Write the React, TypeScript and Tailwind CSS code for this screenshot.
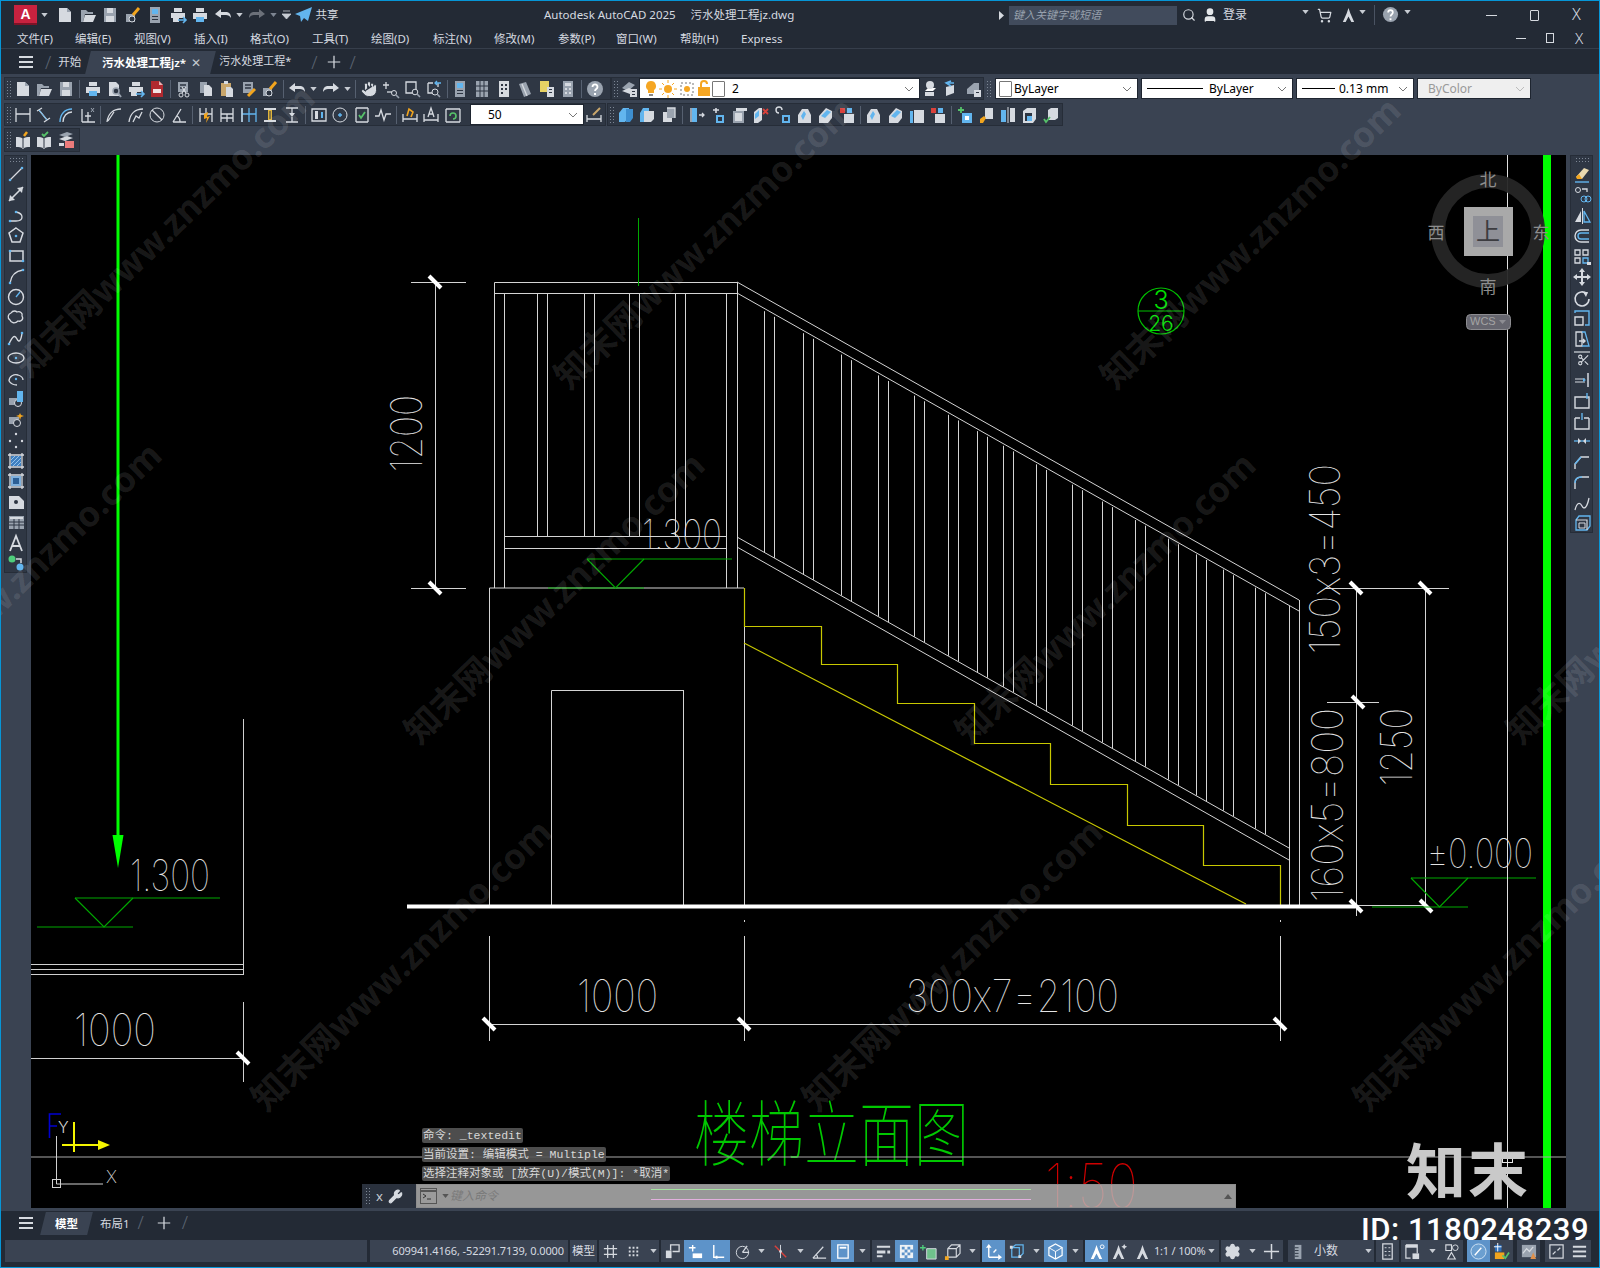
import React from "react";
import { Hand, Scissors, Settings, Search, ShoppingCart, User, Wrench } from "lucide-react";

const L = "#d6dae0";
const M = "#9aa3af";
const B = "#62b5ee";
const O = "#f2a51e";
const D = "#2d3542";

const S = (d: string, c = L, w = 1.3) => <path d={d} stroke={c} strokeWidth={w} fill="none" />;
const F = (d: string, c = L) => <path d={d} fill={c} />;
const doc = F("M4 2h7l3 3v11H4z");

const ICONS: Record<string, React.ReactNode> = {
  new: <>{F("M3 2h8l4 4v10H3z")}{F("M11 2l4 4h-4z", M)}</>,
  open: <>{F("M2 4h5l2 2h5v2H6l-2 8H2z", M)}{F("M6 9h11l-3 7H4z")}</>,
  save: <>{F("M3 2h12v14H3z", M)}{F("M6 2h6v5H6z", L)}{F("M5 10h8v6H5z", L)}</>,
  print: <>{F("M5 2h8v4H5z")}{F("M2 7h14v6H2z")}{F("M5 11h8v5H5z", B)}</>,
  preview: <>{doc}<circle cx="11" cy="11" r="3" fill={D} stroke={M} strokeWidth="1.5" />{S("M13 13l3 4", M, 2)}</>,
  plot: <>{F("M5 2h8v4H5z")}{F("M2 7h14v5H2z")}{F("M4 12h6v4H4z", L)}{S("M9 14h8M14 11l3 3-3 3", B, 1.6)}</>,
  dwf: <>{F("M3 1h8l4 4v12H3z", "#b02a30")}{F("M11 1l4 4h-4z", "#e6b5b5")}{F("M5 9h8v4H5z", "#f3e3e3")}</>,
  cut: <>{F("M3 2h10v10H3z", M)}{S("M5 5h6M5 8h6", D)}<circle cx="6" cy="15" r="2" fill="none" stroke={L} /><circle cx="12" cy="15" r="2" fill="none" stroke={L} />{S("M7 13l4-6M11 13L7 7")}</>,
  copy: <>{F("M3 2h7v11H3z", M)}{F("M7 5h5l3 3v8H7z")}</>,
  paste: <>{F("M3 3h10v13H3z", "#c9a66b")}{F("M6 1h4v3H6z")}{F("M8 7h5l2 2v8H8z")}</>,
  match: <>{F("M3 2h10v11H3z", M)}{S("M5 5h6M5 8h6", D)}{S("M8 16l7-7", O, 3)}</>,
  brush: <>{F("M2 8h9v8H2z", M)}<circle cx="8" cy="13" r="3" fill={D} stroke={L} />{S("M9 9l6-7", O, 3)}</>,
  undo: <>{F("M1 8l6-5v3h5c3 0 5 2 5 6-1-2-3-3-5-3H7v3z")}</>,
  redo: <>{F("M17 8l-6-5v3H6c-3 0-5 2-5 6 1-2 3-3 5-3h5v3z")}</>,
  hand: <Hand x="0" y="0" width="18" height="18" color={D} fill={L} strokeWidth={1.2} />,
  zreal: <>{S("M4 2v7M1 5h6")}{S("M5 12h5", L)}<circle cx="12" cy="13" r="2.5" fill="none" stroke={L} />{S("M14 15l3 3", M, 1.6)}</>,
  zwin: <>{S("M3 2h10v11H3z", L)}<circle cx="12" cy="12" r="2.8" fill={D} stroke={L} />{S("M14 14l3 3", M, 1.6)}</>,
  zprev: <>{S("M3 3h5M3 3v10h4M13 3v4", L)}{S("M10 3h6M12 1l-2 2 2 2", B)}<circle cx="10" cy="12" r="3" fill="none" stroke={L} />{S("M12 14l3 3", M, 1.6)}</>,
  props: <>{F("M4 1h10v16H4z", M)}{F("M6 3h6v5H6z", B)}{F("M6 10h6v1H6zM6 13h6v1H6z", D)}</>,
  design: <>{F("M3 1h12v16H3z", M)}{S("M7 1v16M11 1v16M3 6h12M3 11h12", D, 1)}</>,
  sheet: <>{F("M4 1h10v16H4z")}{F("M6 4h2v2H6zM10 4h2v2h-2zM6 8h2v2H6zM10 8h2v2h-2zM6 12h2v2H6z", D)}</>,
  pen: <>{F("M3 4l7-2 5 12-7 3z", M)}{S("M6 4l5 12", L)}</>,
  tool: <>{F("M2 1h9v11H2z", "#e7d264")}{F("M9 7h7v10H9z")}{F("M11 9h3v1h-3zM11 12h3v1h-3z", D)}</>,
  calc: <>{F("M4 1h10v16H4z", M)}{F("M6 3h6v3H6z", L)}{F("M6 8h2v2H6zM10 8h2v2h-2zM6 12h2v2H6zM10 12h2v2h-2z", L)}</>,
  help: <><circle cx="9" cy="9" r="8" fill={M} />{S("M6.5 7c0-3.5 5-3.5 5 0 0 2-2.5 2-2.5 4", "#fff", 1.8)}{F("M8 13h2v2H8z", "#fff")}</>,
  layers: <>{F("M2 8l7-6 6 3-7 6z", M)}{F("M2 11l7-3 7 3-6 3z")}{F("M10 9h7v8h-7z", L)}{F("M12 11h3v1h-3zM12 14h3v1h-3z", D)}</>,
  dlin: <>{S("M2 2v14M16 2v14M2 8h14")}</>,
  dali: <>{S("M2 5l5-3M9 16l6-4M4 4l8 10", L)}{S("M4 4l8 10", B, 1)}</>,
  darc: <>{S("M3 16C3 8 8 3 15 3", B, 1.4)}{S("M6 16C6 10 10 6 15 6")}</>,
  dord: <>{S("M3 16V3M3 16h13M9 16V6M6 10h6")}{S("M12 2l3 4M15 2l-3 4", M, 1)}</>,
  drad: <>{S("M2 16C3 8 8 3 16 3M3 15l6-9")}</>,
  djog: <>{S("M2 16C3 8 8 3 16 3M6 16l3-6 3 2 3-6")}</>,
  ddia: <><circle cx="9" cy="9" r="7" fill="none" stroke={L} />{S("M4 4l10 10")}</>,
  dang: <>{S("M3 16h13M3 16L11 3M10 16c0-3-1-5-3-6")}</>,
  qdim: <>{S("M3 2v14M15 2v14M3 8h12M9 2v6")}{F("M7 8l4-2-1 5 3-1-4 7 1-5-3 1z", O)}</>,
  dbase: <>{S("M3 2v14M15 2v14M3 8h12M3 12h12M9 8v8")}</>,
  dcont: <>{S("M2 2v14M9 2v14M16 2v14M2 8h14", B)}{S("M2 2v14", L)}</>,
  dspace: <>{F("M3 2h12v2H3zM3 14h12v2H3z", L)}{F("M7 4h4v10H7z", "#e0b53c")}{S("M9 5v8", D, 1)}</>,
  dbreak: <>{S("M3 2h12M9 2v5M9 11v5M3 16h12")}{F("M6 7h6l-3 4z", L)}</>,
  tol: <>{S("M2 3h14v12H2z")}{F("M5 5h3v8H5z", L)}{F("M11 6h2v6h-2z", B)}</>,
  cen: <><circle cx="9" cy="9" r="7" fill="none" stroke={L} />{S("M9 7v4M7 9h4", B, 1.4)}</>,
  insp: <>{S("M3 2h12M3 2v14M15 2v14M3 16h12")}{S("M6 9l2 3 4-6", "#56c26a", 1.8)}</>,
  jog: <>{S("M1 10h4l2-6 3 10 2-6h5", L)}</>,
  tedit: <>{S("M2 16V8M16 16V8M2 13h14")}{S("M6 10l2-7 4 3-2 5", O, 1.6)}</>,
  talign: <>{S("M2 16V8M16 16V8M2 14h14")}{S("M6 11l3-9 3 9M7 8h4")}</>,
  dupd: <>{S("M2 3h14M2 3v13M16 3v13M2 16h14")}{S("M6 10a3 3 0 1 1 3 3", "#56c26a", 1.6)}</>,
  dstyle: <>{S("M2 16V9M16 16V9M2 13h14")}{S("M8 9l7-7", "#c9a66b", 2)}</>,
  s1: <>{F("M2 7l4-5h6v9l-4 5H2z", B)}{F("M9 3h7v9l-3 4H9z", "#3e8fd0")}</>,
  s2: <>{F("M2 7l3-5h6v9l-3 5H2z", B)}{F("M6 5h10v8l-3 3H6z")}</>,
  s3: <>{F("M3 6h9v10H3z")}{F("M7 2h8v10H7z", M)}{S("M7 2h8v10", L)}</>,
  s4: <>{F("M3 2h5v14H3z", M)}{F("M5 2h5v14H5z", B)}{S("M12 9h5M15 7l2 2-2 2")}</>,
  s5: <>{S("M8 2v5M5 4h6", L, 1.6)}{F("M8 9h8v8H8z", B)}{F("M10 11h4v4h-4z", D)}</>,
  s6: <>{F("M3 5h11v12H3z", M)}{F("M5 7h7v8H5z", L)}{F("M6 2h11v3H6z", L)}</>,
  s7: <>{F("M3 6l5-4h3v12l-4 3H3z")}{F("M4 8l4-4v6l-4 3z", B)}{S("M12 3l5 5M17 3l-5 5", "#d9413b", 1.8)}</>,
  s8: <>{S("M6 7a3 3 0 1 1 3-3", L, 1.4)}{F("M9 9h8v8H9z", B)}{F("M11 11h4v4h-4z", D)}</>,
  s9: <>{F("M3 9l4-6h6l3 6v8H3z", L)}{F("M6 10l3-5 2 3-3 6z", B)}</>,
  s10: <>{F("M3 10l7-8 6 3v7l-4 5H3z", L)}{F("M5 10l6-6 4 2-6 6z", B)}</>,
  s11: <>{F("M6 4h10v13H6z", L)}{F("M2 5h3v12H2z", B)}</>,
  s12: <>{F("M2 2h5v5H2z", "#d9413b")}{F("M9 2h5v5H9z", B)}{F("M6 8h10v9H6z", L)}</>,
  s13: <>{S("M5 1v6M2 4h6", "#56c26a", 1.8)}{F("M6 7h10v10H6z", B)}{F("M9 10h4v4H9z", "#fff")}</>,
  s14: <>{F("M8 2h8v11H8z", L)}{F("M3 13l4-3 2 2-3 5H3z", O)}</>,
  s15: <>{F("M2 4h5v12H2z", B)}{F("M11 2h5v14h-5z", L)}{S("M9 1v16", L, 1)}</>,
  s16: <>{F("M3 5l4-3h9v11l-3 4H3z", L)}{F("M5 7h7v8H5z", D)}{F("M7 10h5v5H7z", B)}</>,
  s17: <>{F("M6 4l3-2h7v10l-3 2H6z", L)}{S("M2 13l2 3 4-5", "#56c26a", 1.8)}</>,
  p1: <>{F("M3 11h8l3-3H6z", "#fff")}{F("M3 12h9v4H3z", L)}<circle cx="8" cy="5" r="4" fill={L} /></>,
  p2: <>{F("M3 7l8-2v8l-8 3z", L)}{S("M3 3h8M8 1L3 3l5 3", B, 1.5)}</>,
  p3: <>{F("M3 9l7-6h5v8l-4 3H3z", M)}{F("M10 10h7v7h-7z", L)}{F("M12 12h3v1h-3z", D)}</>,
  book: <>{F("M2 6c3 0 5 0 7 2 2-2 4-2 7-2v10c-3 0-5 0-7 2-2-2-4-2-7-2z")}{S("M9 8v9", D, 1)}{S("M10 5l3-4", O, 2.5)}</>,
  book2: <>{F("M2 6c3 0 5 0 7 2 2-2 4-2 7-2v10c-3 0-5 0-7 2-2-2-4-2-7-2z")}{S("M9 8v9", D, 1)}{S("M7 3l2 2 4-4", "#56c26a", 1.8)}</>,
  stack: <>{F("M2 4l8-3 6 2-8 3z", M)}{F("M2 8l8-3 6 2-8 3z")}{F("M8 10h9v7H8z", "#ec7b7b")}{F("M2 12h5v3H2z")}</>,
  line: <>{S("M3 15L15 3")}<circle cx="3" cy="15" r="1.3" fill={B} /><circle cx="15" cy="3" r="1.3" fill={B} /></>,
  xline: <>{S("M2 16L16 2", L, 1.6)}{F("M16 2l-1 6-5-5z")}{F("M2 16l1-6 5 5z")}</>,
  pline: <>{S("M3 15h6c5 0 6-2 6-4s-1-4-6-5")}<circle cx="3" cy="15" r="1.3" fill={B} /><circle cx="9" cy="6" r="1.3" fill={B} /></>,
  poly: <><path d="M9 2l7 5-3 9H5L2 7z" fill="none" stroke={L} strokeWidth="1.5" /><circle cx="9" cy="10" r="1.3" fill={B} /></>,
  rect: <><path d="M3 4h13v10H3z" fill="none" stroke={L} strokeWidth="1.5" /><circle cx="3" cy="4" r="1.3" fill={B} /><circle cx="16" cy="14" r="1.3" fill={B} /></>,
  arc: <>{S("M3 16C4 9 8 4 16 3", L, 1.4)}<circle cx="3" cy="16" r="1.3" fill={B} /><circle cx="16" cy="3" r="1.3" fill={B} /></>,
  circle: <><circle cx="9" cy="9" r="7.5" fill="none" stroke={L} strokeWidth="1.4" />{S("M9 9l4-5", B)}</>,
  cloud: <>{S("M4 5c2-3 5-2 6-1 3-1 6 1 5 4 2 3-1 6-4 5-3 3-7 2-8-1-3-2-2-6 1-7z", L, 1.3)}</>,
  spline: <>{S("M2 15c4-9 6-9 8-5s4 2 5-6", L, 1.4)}<circle cx="2" cy="15" r="1.3" fill={B} /><circle cx="15" cy="4" r="1.3" fill={B} /></>,
  ell: <><ellipse cx="9" cy="9" rx="8" ry="5" fill="none" stroke={L} strokeWidth="1.3" /><circle cx="9" cy="9" r="1.2" fill={B} /></>,
  earc: <>{S("M2 11c0-5 5-7 9-6 3 1 5 3 5 5", L, 1.3)}{S("M2 11c2 3 5 4 8 4", L, 1.3)}<circle cx="9" cy="9" r="1.2" fill={B} /></>,
  block: <>{F("M2 8h10v7H2z", M)}<circle cx="11" cy="13" r="3.5" fill={D} stroke={L} />{F("M10 1h6v11h-6z", B)}</>,
  block2: <>{F("M2 6h10v7H2z", M)}<circle cx="10" cy="12" r="3.5" fill={D} stroke={L} />{F("M13 2l1 2 3 1-3 1-1 3-1-3-3-1 3-1z", O)}</>,
  point: <><circle cx="9" cy="3" r="1.2" fill={L} /><circle cx="3" cy="10" r="1.2" fill={L} /><circle cx="15" cy="10" r="1.2" fill={L} /><circle cx="9" cy="16" r="1.2" fill={L} /></>,
  hatch: <>{S("M3 1v16M15 1v16M1 3h16M1 15h16")}{F("M4 4h10v10H4z", "#3f7fc0")}{S("M4 8l4-4M4 12l8-8M6 14l8-8M10 14l4-4", "#a9d3f5", 0.8)}</>,
  grad: <>{S("M3 1v16M15 1v16M1 3h16M1 15h16")}{F("M4 4h10v10H4z", "#7fb0dd")}{F("M6 6h6v6H6z", "#2c5f96")}</>,
  region: <>{F("M2 3h10l5 5v8H2z")}<circle cx="9" cy="9" r="2" fill={D} /></>,
  table: <>{F("M2 3h15v13H2z", M)}{F("M3 4h13v2H3z", L)}{S("M2 9h15M2 12h15M7 6v10M12 6v10", D, 1)}</>,
  mtext: <>{S("M3 17L9 2l6 15M5 12h8", L, 1.8)}</>,
  add: <><circle cx="5" cy="5" r="3.5" fill="#4fce7c" /><circle cx="13" cy="13" r="3.5" fill={B} />{S("M9 5h5v4", L, 1.5)}</>,
  erase: <>{F("M3 11l8-9 5 2-7 9z", "#e9d9b0")}{F("M3 11l3-3 3 5H4z", O)}{S("M2 16h14", B, 1.4)}</>,
  ccopy: <><circle cx="11" cy="13" r="3" fill="none" stroke={B} /><circle cx="15" cy="13" r="3" fill="none" stroke={B} /><circle cx="5" cy="4" r="2.5" fill="none" stroke={L} />{S("M9 3h5v3")}</>,
  mirror: <>{F("M2 15l6-11v11z", L)}{S("M11 4l6 11h-6z", B)}{S("M9.5 1v16", L, 1)}</>,
  offset: <>{S("M16 3H8a6 6 0 0 0 0 12h8", L, 1.4)}{S("M16 6H8a3 3 0 0 0 0 6h8", B, 1.4)}</>,
  array: <>{S("M2 2h5v5H2zM10 2h5v5h-5zM2 10h5v5H2z", L)}{S("M10 10h5v5h-5z", B)}{F("M14 14h4v3h-4z", L)}</>,
  move: <>{S("M9 2v14M2 9h14", L, 2)}{F("M9 0l3 4H6zM9 18l3-4H6zM0 9l4-3v6zM18 9l-4-3v6z")}</>,
  rotate: <>{S("M14 5a7 7 0 1 0 2 5", L, 1.6)}{F("M10 3l5 0-2 5z")}</>,
  scale: <>{S("M2 8h8v8H2z", L, 1.4)}{S("M2 4V2h14v14h-4", B, 1.4)}</>,
  stretch: <>{S("M3 2h6v14H3z", L, 1.3)}{S("M9 2h3l4 14H9", B, 1.3)}{S("M6 11h6M10 9l2 2-2 2", L, 1.4)}</>,
  trim: <>{S("M1 2h16", L, 1.2)}<Scissors x="4" y="3" width="13" height="14" color={L} /></>,
  extend: <>{S("M15 2v14", L, 1.5)}{S("M2 8h10M2 11h10", L, 1.2)}{F("M13 9l-3-2v4z", B)}</>,
  breakp: <>{S("M2 6h14v11H2z", L, 1.4)}{S("M14 2v6", B, 1.4)}</>,
  breakk: <>{S("M2 6v11h14V6M2 6h5M11 6h5", L, 1.4)}{S("M9 1v7", B, 1.4)}</>,
  join: <>{S("M1 9h16", B, 1.3)}{F("M5 6l3 3-3 3zM13 6l-3 3 3 3z", L)}</>,
  chamfer: <>{S("M2 16v-5l6-7h8", L, 1.4)}{S("M2 11l6-7", B, 1.4)}</>,
  fillet: <>{S("M2 16v-6c0-4 3-6 7-6h7", L, 1.4)}{S("M2 10c0-4 3-6 7-6", B, 1.4)}</>,
  blend: <>{S("M2 16c2-8 5-8 7-4s5 2 7-8", L, 1.3)}</>,
  solid: <>{S("M3 6l3-4h11v10l-3 4H3z", B, 1.3)}{S("M3 6h11v10", L, 1.2)}{S("M6 9h6v5H6z", L, 1)}</>,
  snapmode: <>{S("M7 8V2h9v7H9", L, 1.4)}{F("M2 8h6v8H2z", L)}</>,
  grid: <>{S("M6 2v14M12 2v14M2 6h14M2 12h14", L, 1.3)}</>,
  dots: <>{F("M4 4h2v2H4zM8 4h2v2H8zM12 4h2v2h-2zM4 8h2v2H4zM8 8h2v2H8zM12 8h2v2h-2zM4 12h2v2H4zM8 12h2v2H8zM12 12h2v2h-2z", L)}</>,
  snapact: <>{S("M6 2v7M2 5h7", "#fff", 1.5)}{F("M6 11h10v5H6z", "#fff")}</>,
  ortho: <>{S("M4 2v13h11", "#fff", 1.5)}{S("M6 15h2", "#fff", 3)}</>,
  polar: <><circle cx="10" cy="10" r="6.5" fill="none" stroke={L} />{S("M10 10h7M10 10l5-7", L)}</>,
  iso: <>{S("M3 3l12 12", "#d9413b", 1.5)}{S("M9 2v14", L, 1)}<circle cx="9" cy="9" r="1.5" fill={L} /></>,
  ang: <>{S("M2 16h14M2 16L13 4M7 16c0-2-.5-3-1.5-4")}</>,
  dynin: <>{S("M4 2h11v14H4z", "#fff", 1.4)}{F("M6 4h7v2H6z", "#fff")}</>,
  lw: <>{F("M2 3h14v2H2zM2 8h9v3H2zM2 13h6v2H2zM13 8h3v3h-3z", L)}</>,
  transp: <>{F("M2 2h14v14H2z", "#eef2f5")}{F("M4 4h3v3H4zM10 4h3v3h-3zM7 7h3v3H7zM13 7h3v3h-3zM4 10h3v3H4zM10 10h3v3h-3zM7 13h3v3H7z", "#5d93c9")}</>,
  sel: <>{S("M2 2v6M-1 5h6", "#4fce7c", 1.4)}{F("M6 6h10v11H6z", "#6fc18c")}{S("M6 6h10v11H6z", L, 1)}</>,
  cube3: <>{S("M4 6l4-4h9v9l-4 4H4zM4 6h9v9M13 6l4-4", L, 1.2)}{F("M1 14h4v4H1z", O)}</>,
  ucsd: <>{S("M4 15V3M4 15h12", "#fff", 1.5)}{F("M4 1l3 4H1zM18 15l-4-3v6z", "#fff")}{S("M9 10l3-3", "#fff", 1.5)}</>,
  gizmo: <>{S("M4 5l4-3h8v9l-4 4H4zM4 5h8v10", B, 1.3)}{F("M2 3h3v3H2zM11 13h3v3h-3z", L)}</>,
  ucscube: <>{S("M9 1l7 4v8l-7 4-7-4V5z", "#fff", 1.3)}{S("M2 5l7 4 7-4M9 9v8", "#fff", 1)}</>,
  anno: <>{F("M9 2l2 6 4 9h-3l-3-6-3 6H3l4-9z", "#fff")}<circle cx="15" cy="4" r="2" fill="none" stroke="#fff" /></>,
  anno2: <>{F("M8 2l2 6 4 9h-3l-3-6-3 6H2l4-9z", L)}{F("M14 1l1 2 2 1-2 1-1 2-1-2-2-1 2-1z", L)}</>,
  anno3: <>{F("M9 2l2 6 4 9h-3l-3-6-3 6H3l4-9z", L)}</>,
  gear: <Settings x="0" y="0" width="18" height="18" color={L} fill={L} strokeWidth={2} />,
  plus: <>{S("M9 1v16M1 9h16", L, 1.6)}</>,
  units: <>{F("M4 2h7v15H4z", M)}{S("M4 5h4M4 8h4M4 11h4M4 14h4", D, 1)}</>,
  qprops: <>{S("M4 1h10v16H4z", L, 1.3)}{S("M6 5h2M10 5h2M6 9h2M10 9h2M6 13h2M10 13h2", L, 1)}</>,
  lockui: <>{S("M2 2h12v9", L, 1.3)}{S("M2 2v14h5", L, 1.3)}{F("M2 2h12v3H2z", L)}{F("M9 11h7v6H9z", L)}</>,
  iso2: <>{S("M3 2h6v6H3z", L, 1.2)}<circle cx="13" cy="5" r="3" fill="none" stroke={L} />{S("M9 10l4 7H5z", L, 1.2)}</>,
  hw: <><circle cx="9" cy="9" r="8" fill="#6b9fd0" stroke="#cfe2f3" />{S("M5 13l7-8", "#fff", 1.4)}</>,
  clean: <>{F("M2 2h7v7H2z", "#2f6fb8")}{S("M5 0v9M1 4h8", "#fff", 1)}{F("M2 10h10v7H2z", O)}{S("M10 13l3 3 4-6", "#56c26a", 1.8)}</>,
  stat: <>{F("M2 2h15v13H2z", M)}{S("M3 11l4-5 3 3 4-5", L, 1.3)}{F("M11 17l3-7 3 7z", "#e0904a")}</>,
  full: <>{S("M2 2h14v14H2z", L, 1.3)}{S("M5 12l3-3M13 5l-3 3", L, 1.3)}</>,
  menu: <>{F("M2 3h14v2H2zM2 8h14v2H2zM2 13h14v2H2z", L)}</>,
};

const Ico = ({ k, size = 18 }: { k: string; size?: number }) => (
  <svg width={size} height={size} viewBox="0 0 18 18" className="block overflow-visible">
    {ICONS[k]}
  </svg>
);

const Tri = ({ c = "#c7ccd3" }: { c?: string }) => (
  <span className="w-[12px] flex justify-center">
    <svg width="7" height="4" viewBox="0 0 8 5" className="block">
      <path d="M0 0h8L4 5z" fill={c} />
    </svg>
  </span>
);

const Grip = () => (
  <span className="w-[6px] h-[18px] shrink-0 ml-[1px] bg-[radial-gradient(#7d8795_1px,transparent_1px)] bg-[length:3px_3px]" />
);

// row data: name = icon, "|" = separator, "v" = small drop arrow
const Row = ({ items, w = "w-[21.6px]" }: { items: string[]; w?: string }) => (
  <>
    {items.map((k, i) =>
      k === "|" ? (
        <span key={i} className="w-[5px] flex justify-center shrink-0">
          <span className="w-px h-[18px] bg-[#566070]" />
        </span>
      ) : k === "v" ? (
        <Tri key={i} />
      ) : (
        <span key={i} className={`${w} flex justify-center shrink-0`}>
          <Ico k={k} />
        </span>
      )
    )}
  </>
);

const Combo = ({ className, children, dim }: { className: string; children: React.ReactNode; dim?: boolean }) => (
  <div className={`flex items-center h-[21px] border border-[#1e2530] relative text-[12px] ${dim ? "bg-[#efefef] text-[#999]" : "bg-white text-black"} ${className}`}>
    {children}
    <svg width="10" height="6" viewBox="0 0 10 6" className="absolute right-[5px] top-[7px]">
      <path d="M1 1l4 4 4-4" stroke={dim ? "#bbb" : "#777"} fill="none" />
    </svg>
  </div>
);

const Swatch = () => <span className="w-[13px] h-[16px] border border-[#777] bg-white rounded-[1px] shrink-0" />;

const menus: [string, number][] = [
  ["文件(F)", 58], ["编辑(E)", 59], ["视图(V)", 60], ["插入(I)", 56], ["格式(O)", 62], ["工具(T)", 59],
  ["绘图(D)", 62], ["标注(N)", 61], ["修改(M)", 64], ["参数(P)", 58], ["窗口(W)", 64], ["帮助(H)", 61],
];

const leftTools = ["line", "xline", "pline", "poly", "rect", "arc", "circle", "cloud", "spline", "ell", "earc", "block", "block2", "point", "hatch", "grad", "region", "table", "mtext", "add"];
const rightTools = ["erase", "ccopy", "mirror", "offset", "array", "move", "rotate", "scale", "stretch", "trim", "extend", "breakp", "breakk", "join", "chamfer", "fillet", "blend", "solid"];

const balusters = [764, 803, 841, 878, 914, 948, 977, 1003, 1036, 1072, 1102, 1135, 1168, 1196, 1223, 1255];
const flatBalusters = [537, 547, 584, 594, 629, 639, 675, 685];
const slope = 0.563;

const Tick = ({ x, y }: { x: number; y: number }) => (
  <path d={`M${x - 6} ${y - 6}L${x + 6} ${y + 6}`} stroke="#fff" strokeWidth="4" />
);

const Cad = ({ x, y, len, h, rot, c = "#e4e4e4", children }: { x: number; y: number; len: number; h: number; rot?: boolean; c?: string; children: string }) => (
  <text
    x={x}
    y={y}
    fontSize={h / 0.72}
    fontWeight={100}
    fill={c}
    textLength={len}
    lengthAdjust="spacingAndGlyphs"
    transform={rot ? `rotate(-90 ${x} ${y})` : undefined}
    className="font-['Inter','Roboto',sans-serif] [font-feature-settings:'calt'_0]"
  >
    {children}
  </text>
);

const Level = ({ x, y, w, left, v }: { x: number; y: number; w: number; left: number; v: number }) => (
  <g stroke="#00a800" fill="none" strokeWidth="1.2">
    <path d={`M${x} ${y}H${x + w}`} />
    <path d={`M${x} ${y}L${x + v / 2} ${y + 29}L${x + v} ${y}`} />
    <path d={`M${left} ${y + 29}H${x + v}`} />
  </g>
);

const Drawing = () => (
  <svg viewBox="31 155 1535 1053" className="absolute inset-0 w-full h-full">
    {/* left part */}
    <g stroke="#d0d0d0" fill="none" strokeWidth="1">
      <path d="M243.5 719V975M31 964.5H243M31 969.5H243M31 974.5H243M31 1058.5H243M243.5 1002V1082" />
    </g>
    <Tick x={243} y={1058} />
    <path d="M118 155V840" stroke="#00ff00" strokeWidth="3" />
    <path d="M112.5 835H123.5L118 868z" fill="#00ff00" />
    <Cad x={130} y={891} len={80} h={31}>1.300</Cad>
    <Level x={75} y={898} w={145} left={37} v={58} />
    <Cad x={74} y={1046} len={82} h={32}>1000</Cad>

    {/* railing */}
    <g stroke="#d4d4d4" fill="none" strokeWidth="1">
      <path d="M494.5 282.5H737.5V588M494.5 282.5V588M504.5 293.5V588M494.5 293.5H737.5M726.5 293.5V588M504 536.5H726M504 548.5H726" />
      {flatBalusters.map((x) => (
        <path key={x} d={`M${x + 0.5} 293V536`} />
      ))}
      <path d="M737 282L1299 600M737 293L1299 611M737 537L1289 848M737 547L1289 860M1299.5 600V906M1289.5 606V906" />
      {balusters.map((x) => (
        <g key={x}>
          <path d={`M${x + 0.5} ${293 + (x - 737) * slope + 3}V${537 + (x - 737) * slope}`} />
          <path d={`M${x + 10.5} ${293 + (x + 10 - 737) * slope + 3}V${537 + (x + 10 - 737) * slope}`} />
        </g>
      ))}
      <path d="M489.5 588H744M489.5 588V906M744.5 626V906M551.5 690.5H684M551.5 690.5V906M683.5 690.5V906" />
    </g>
    <path d="M638.5 218V286" stroke="#00a800" strokeWidth="1" fill="none" />
    <Cad x={642} y={549} len={80} h={29}>1.300</Cad>
    <Level x={587} y={559} w={145} left={548} v={57} />

    {/* dim 1200 */}
    <g stroke="#d4d4d4" fill="none" strokeWidth="1">
      <path d="M411 282.5H466M411 588.5H466M435.5 282V588" />
    </g>
    <Tick x={435} y={282} />
    <Tick x={435} y={588} />
    <Cad x={422} y={472} len={77} h={31} rot>1200</Cad>

    {/* stairs */}
    <path d="M744.5 588V626.5H821.5V664.5H897.5V703.5H974.5V743.5H1050.5V784.5H1127.5V825.5H1203.5V865.5H1280.5V906" stroke="#c8c800" fill="none" strokeWidth="1.2" />
    <path d="M744 643L1246 904" stroke="#c8c800" fill="none" strokeWidth="1.2" />

    {/* right dims */}
    <g stroke="#d4d4d4" fill="none" strokeWidth="1">
      <path d="M1325 588.5H1449M1327 702.5H1379M1356.5 588V916M1425.5 588V906" />
      <path d="M489.5 936V1041M744.5 936V1041M1280.5 936V1041M489 1024.5H1280M1355 905.5H1425" />
      <path d="M744.5 920v2M1280.5 920v2" />
    </g>
    <path d="M407 906.5H1355" stroke="#fff" strokeWidth="4" />
    {[[1356, 588], [1425, 588], [1358, 702], [1356, 906], [1426, 906], [489, 1024], [744, 1024], [1280, 1024]].map(([x, y]) => (
      <Tick key={`${x}-${y}`} x={x} y={y} />
    ))}
    <Cad x={1340} y={654} len={190} h={30} rot>150x3=450</Cad>
    <Cad x={1343} y={902} len={194} h={31} rot>160x5=800</Cad>
    <Cad x={1412} y={786} len={78} h={31} rot>1250</Cad>
    <Cad x={1427} y={868} len={106} h={29}>±0.000</Cad>
    <Level x={1411} y={878} w={125} left={1372} v={57} />
    <Cad x={577} y={1012} len={81} h={32}>1000</Cad>
    <Cad x={906} y={1012} len={213} h={32}>300x7=2100</Cad>

    {/* section mark */}
    <g stroke="#00c000" fill="none" strokeWidth="1.2">
      <circle cx="1161" cy="311" r="23" />
      <path d="M1138 311H1184" />
    </g>
    <text x="1161" y="309" textAnchor="middle" fontSize="25" fontWeight={300} fill="#00e000" className="font-['Inter',sans-serif]">3</text>
    <text x="1161" y="331" textAnchor="middle" fontSize="21" fontWeight={300} fill="#00e000" className="font-['Inter',sans-serif]">26</text>

    {/* title */}
    <text x="694" y="1160" fontSize="72" fontWeight={100} fill="#00c800" textLength={275} lengthAdjust="spacingAndGlyphs" className="font-['Noto_Sans_CJK_SC',sans-serif]">楼梯立面图</text>
    <Cad x={1045} y={1208} len={93} h={44} c="#d00000">1:50</Cad>

    {/* big green column + crosshair */}
    <rect x="1543" y="155" width="8" height="1053" fill="#00ff00" />
    <path d="M1507.5 155V1208" stroke="#e0e0e0" strokeWidth="1" />
    <path d="M31 1157H1566" stroke="#a8a8a8" strokeWidth="1.2" />

    {/* viewcube */}
    <circle cx="1488" cy="231" r="50" fill="none" stroke="#262626" strokeWidth="14" opacity="0.95" />
    <rect x="1464" y="207" width="49" height="49" fill="#a9a9a9" />
    <rect x="1473" y="216" width="30" height="31" fill="#8f9097" />
    <text x="1488" y="240" textAnchor="middle" fontSize="24" fill="#3c3c40" className="font-['Noto_Sans_CJK_SC',sans-serif]">上</text>
    <g fill="#8d8d8d" fontSize="17" textAnchor="middle" className="font-['Noto_Sans_CJK_SC',sans-serif]">
      <text x="1488" y="186">北</text>
      <text x="1488" y="293">南</text>
      <text x="1436" y="239">西</text>
      <text x="1541" y="239">东</text>
    </g>
    <rect x="1466.5" y="314.5" width="44" height="15" rx="4" fill="#66666f" stroke="#8c8c90" />
    <text x="1470" y="325" fontSize="11" fill="#a4a4a4" className="font-['Liberation_Sans',sans-serif]">WCS</text>
    <path d="M1499 320h7l-3.500 4z" fill="#8d8d93" />

    {/* ucs */}
    <path d="M49.500 1138V1114H61M49.500 1126H57" stroke="#0000d0" strokeWidth="1.6" fill="none" />
    <path d="M56.500 1136V1184H103" stroke="#d0d0d0" fill="none" />
    <rect x="52.500" y="1179.500" width="8" height="8" fill="none" stroke="#d0d0d0" />
    <text x="58" y="1133" fontSize="16" fontWeight={300} fill="#d0d0d0" className="font-['Inter',sans-serif]">Y</text>
    <text x="106" y="1183" fontSize="17" fontWeight={200} fill="#d0d0d0" className="font-['Inter',sans-serif]">X</text>
    <path d="M74 1122V1152M62 1145H100" stroke="#f5f500" strokeWidth="2" fill="none" />
    <path d="M98 1140L110 1145L98 1150z" fill="#f5f500" />
    <rect x="1502.500" y="1152.500" width="10" height="10" fill="none" stroke="#e8e8e8" />
  </svg>
);

const CommandLine = () => (
  <div className="absolute left-[331px] bottom-0 flex flex-col items-start">
    <div className="flex flex-col items-start gap-[4px] ml-[60px] mb-[3px] font-['Liberation_Mono','Noto_Sans_CJK_SC',monospace] text-[11.500px] leading-[15px] text-[#d8d8d8]">
      <div className="bg-[#555]/90 rounded-[2px] px-[1px]">命令: _textedit</div>
      <div className="bg-[#555]/90 rounded-[2px] px-[1px]">当前设置: 编辑模式 = Multiple</div>
      <div className="bg-[#555]/90 rounded-[2px] px-[1px]">选择注释对象或 [放弃(U)/模式(M)]: *取消*</div>
    </div>
    <div className="flex h-[24px] w-[874px]">
      <div className="w-[54px] bg-[#2a313d] flex items-center gap-[5px] pl-[2px]">
        <Grip />
        <span className="text-[#c5cad1] text-[13px] leading-none">x</span>
        <Wrench size={15} color="#d6dae0" fill="#d6dae0" />
      </div>
      <div className="relative flex-1 bg-[#b8b8b8]/[.82] border border-[#8e8e8e] flex items-center pl-[3px] gap-[2px]">
        <svg width="17" height="16" viewBox="0 0 17 16" className="block">
          <rect x="0.500" y="0.500" width="16" height="15" fill="#9b9b9b" stroke="#555" />
          <path d="M0 3h17" stroke="#555" strokeWidth="2" />
          <path d="M3 6l3 2-3 2M7 11h4" stroke="#333" fill="none" />
        </svg>
        <Tri c="#555" />
        <span className="italic text-[12px] text-[#7a7a7a] ml-[-3px]">键入命令</span>
        <span className="absolute left-[234px] top-[4px] w-[380px] h-[1px] bg-[#a4e2a0]" />
        <span className="absolute left-[234px] top-[14px] w-[380px] h-[1px] bg-[#e2b0de]" />
        <svg width="8" height="5" viewBox="0 0 8 5" className="absolute right-[3px] top-[9px]">
          <path d="M0 5h8L4 0z" fill="#555" />
        </svg>
      </div>
    </div>
  </div>
);

type Cell = { k?: string; on?: boolean; tri?: boolean };

const Cells = ({ cells, className = "" }: { cells: Cell[]; className?: string }) => (
  <div className={`flex items-center h-full bg-[#3a4352] ${className}`}>
    {cells.map((c, i) =>
      c.tri ? (
        <span key={i} className="w-[16px] flex justify-center shrink-0"><Tri /></span>
      ) : (
        <span key={i} className={`w-[23px] h-full flex items-center justify-center shrink-0 ${c.on ? "bg-[#5d93c9]" : ""}`}>
          <Ico k={c.k as string} size={17} />
        </span>
      )
    )}
  </div>
);

const T: Cell = { tri: true };

const marks = [
  [28, 378], [568, 390], [1114, 390],
  [-125, 735], [418, 745], [969, 745], [1520, 745],
  [265, 1112], [816, 1112], [1367, 1112],
];

export default function App() {
  return (
    <div className="relative w-[1600px] h-[1268px] overflow-hidden flex flex-col bg-[#3a4352] border border-[#0696d7] font-['Noto_Sans','Noto_Sans_CJK_SC',sans-serif] text-[12px] text-[#d6dae0]">
      {/* title bar */}
      <div className="relative h-[27px] shrink-0 bg-[#232a35] flex items-center">
        <div className="ml-[13px] w-[23px] h-[20px] bg-[#c8223f] border-b-2 border-[#7d1327] flex items-center justify-center text-white font-bold text-[14px] leading-none font-['Liberation_Sans',sans-serif]">A</div>
        <span className="ml-[1px] w-[12px] flex"><Tri /></span>
        <div className="flex items-center ml-[4px]">
          {["new", "open", "save", "brush", "props", "plot", "print"].map((k) => (
            <span key={k} className="w-[22.500px] flex justify-center"><Ico k={k} /></span>
          ))}
          <span className="w-[22px] flex justify-center"><Ico k="undo" /></span>
          <Tri />
          <span className="w-[22px] flex justify-center opacity-40"><Ico k="redo" /></span>
          <Tri c="#7d8592" />
          <span className="w-[14px] flex justify-center">
            <svg width="9" height="9" viewBox="0 0 9 9"><path d="M1 1h7M0 4h9L4.500 9z" stroke="#c7ccd3" fill="#c7ccd3" strokeWidth="0.800" /></svg>
          </span>
          <svg width="18" height="16" viewBox="0 0 18 16" className="ml-[1px]"><path d="M17 0L0 7l5 2 1 6 3-4 4 3z" fill="#62b5ee" /></svg>
          <span className="ml-[3px] text-[11.500px]">共享</span>
        </div>
        <div className="absolute left-[543px] text-[11.500px] whitespace-pre">Autodesk AutoCAD 2025     污水处理工程jz.dwg</div>
        <svg width="5" height="9" viewBox="0 0 5 9" className="absolute left-[998px] top-[10px]"><path d="M0 0l5 4.500L0 9z" fill="#d6dae0" /></svg>
        <div className="absolute left-[1008px] top-[5px] w-[168px] h-[19px] bg-[#414b5c] flex items-center pl-[4px] italic text-[11px] text-[#98a1ad]">键入关键字或短语</div>
        <Search size={14} className="absolute left-[1181px] top-[7px]" color="#d6dae0" />
        <User size={16} className="absolute left-[1201px] top-[6px]" color="#e4e7ea" fill="#e4e7ea" />
        <span className="absolute left-[1222px]">登录</span>
        <span className="absolute left-[1298px] top-[9px]"><Tri /></span>
        <ShoppingCart size={15} className="absolute left-[1316px] top-[7px]" color="#d6dae0" />
        <span className="absolute left-[1339px] top-[5px]"><Ico k="anno3" size={17} /></span>
        <span className="absolute left-[1355px] top-[9px]"><Tri /></span>
        <span className="absolute left-[1373px] top-[4px] w-px h-[20px] bg-[#4a5362]" />
        <span className="absolute left-[1381px] top-[5px]"><Ico k="help" size={17} /></span>
        <span className="absolute left-[1400px] top-[9px]"><Tri /></span>
        <span className="absolute left-[1485px] top-[14px] w-[11px] h-px bg-[#d6dae0]" />
        <span className="absolute left-[1529px] top-[9px] w-[9px] h-[11px] border border-[#d6dae0] rounded-[1px]" />
        <span className="absolute left-[1571px] top-[3px] text-[16px] leading-[20px] font-light">X</span>
      </div>

      {/* menu bar */}
      <div className="relative h-[21px] shrink-0 bg-[#232a35] border-b border-[#363e4b] flex items-center pl-[16px] pt-[2px] text-[11.500px]">
        {menus.map(([m, w]) => (
          <span key={m} style={{ width: w }} className="shrink-0">{m}</span>
        ))}
        <span>Express</span>
        <span className="absolute left-[1515px] top-[10px] w-[10px] h-px bg-[#d6dae0]" />
        <span className="absolute left-[1545px] top-[5px] w-[8px] h-[10px] border border-[#d6dae0]" />
        <span className="absolute left-[1574px] top-[0px] text-[15px] leading-[20px] font-light">X</span>
      </div>

      {/* file tabs */}
      <div className="h-[25px] shrink-0 bg-[#232a35] flex items-center">
        <span className="ml-[16px]"><Ico k="menu" /></span>
        <span className="ml-[10px] text-[#5b6472] text-[18px] font-light leading-none">/</span>
        <span className="ml-[7px] text-[11.500px]">开始</span>
        <div className="ml-[7px] w-[125px] h-[23px] self-end -skew-x-[14deg] bg-[#3a4352] flex items-center pl-[14px] whitespace-nowrap">
          <span className="skew-x-[14deg] font-semibold text-white text-[11.500px] w-[86px]">污水处理工程jz*</span>
          <span className="skew-x-[14deg] ml-[3px] text-[#c5cad1] text-[12px]">✕</span>
        </div>
        <span className="ml-[6px] text-[11px]">污水处理工程*</span>
        <span className="ml-[20px] text-[#5b6472] text-[18px] font-light leading-none">/</span>
        <span className="ml-[9px]"><Ico k="plus" size={14} /></span>
        <span className="ml-[9px] text-[#5b6472] text-[18px] font-light leading-none">/</span>
      </div>

      {/* toolbars */}
      <div className="h-[81px] shrink-0 flex flex-col pt-[3px] pl-[3px]">
        <div className="flex h-[23px]">
          <div className="flex items-center w-[607px] bg-[#2f3744] border border-[#262d38]">
            <Grip />
            <Row items={["new", "open", "save", "|", "print", "preview", "plot", "dwf", "|", "cut", "copy", "paste", "match", "brush", "|", "undo", "v", "redo", "v", "|", "hand", "zreal", "zwin", "zprev", "|", "props", "design", "sheet", "pen", "tool", "calc", "|", "help"]} />
          </div>
          <div className="flex items-center bg-[#2f3744] border border-[#262d38]">
            <Grip />
            <span className="w-[20px] flex justify-center"><Ico k="layers" /></span>
            <Combo className="w-[281px] pl-[3px] gap-[1px]">
              <svg width="14" height="16" viewBox="0 0 14 16" className="ml-[1px]"><path d="M7 0a5 5 0 0 1 3 9v3H4V9a5 5 0 0 1 3-9z" fill="#f5a623" /><rect x="5" y="13" width="4" height="2" fill="#888" /></svg>
              <svg width="18" height="18" viewBox="0 0 18 18"><circle cx="9" cy="9" r="4" fill="#f5a623" /><path d="M9 0v3M9 15v3M0 9h3M15 9h3M3 3l2 2M13 13l2 2M3 15l2-2M13 5l2-2" stroke="#f5a623" /></svg>
              <svg width="18" height="18" viewBox="0 0 18 18"><path d="M3 3h12v12H3z" fill="none" stroke="#777" strokeDasharray="2 2" /><circle cx="9" cy="9" r="3" fill="#f5a623" /></svg>
              <svg width="14" height="17" viewBox="0 0 14 17"><rect x="1" y="7" width="12" height="9" fill="#f5a623" /><path d="M4 7V4a3 3 0 0 1 6 0" stroke="#f5a623" strokeWidth="2" fill="none" /></svg>
              <Swatch />
              <span className="ml-[6px]">2</span>
            </Combo>
            <Row w="w-[21px]" items={["p1", "p2", "p3"]} />
          </div>
          <div className="flex items-center gap-[3px] ml-[1px]">
            <Grip />
            <Combo className="w-[143px] pl-[3px] gap-[2px]"><Swatch /><span>ByLayer</span></Combo>
            <Combo className="w-[152px] pl-[5px]"><span className="w-[56px] h-px bg-black" /><span className="ml-[6px]">ByLayer</span></Combo>
            <Combo className="w-[118px] pl-[5px]"><span className="w-[33px] h-px bg-black" /><span className="ml-[4px]">0.13 mm</span></Combo>
            <Combo dim className="w-[114px] pl-[10px]"><span>ByColor</span></Combo>
          </div>
        </div>
        <div className="flex h-[23px] mt-[3px]">
          <div className="flex items-center w-[602px] bg-[#2f3744] border border-[#262d38]">
            <Grip />
            <Row items={["dlin", "dali", "darc", "dord", "|", "drad", "djog", "ddia", "dang", "|", "qdim", "dbase", "dcont", "dspace", "dbreak", "|", "tol", "cen", "insp", "jog", "|", "tedit", "talign", "dupd"]} />
            <Combo className="w-[114px] ml-[6px] pl-[17px]"><span>50</span></Combo>
            <span className="w-[20px] flex justify-center"><Ico k="dstyle" /></span>
          </div>
          <div className="flex items-center ml-[1px] bg-[#2f3744] border border-[#262d38]">
            <Grip />
            <Row items={["s1", "s2", "s3", "|", "s4", "s5", "s6", "s7", "s8", "s9", "s10", "s12", "|", "s9", "s10", "s11", "s12", "|", "s13", "s14", "s15", "s16", "s17"]} />
          </div>
        </div>
        <div className="flex h-[24px] mt-[2px]">
          <div className="flex items-center bg-[#2f3744] border border-[#262d38] pr-[2px]">
            <Grip />
            <Row items={["book", "book2", "stack"]} />
          </div>
        </div>
      </div>

      {/* workspace */}
      <div className="flex-1 flex min-h-0">
        <div className="w-[30px] shrink-0 pl-[3px]">
          <div className="w-[23px] h-[418px] bg-[#2f3744] border border-[#262d38] flex flex-col items-center">
            <span className="h-[8px] w-[14px] mt-[1px] bg-[radial-gradient(#7d8795_1px,transparent_1px)] bg-[length:3px_3px]" />
            <div className="flex flex-col items-center gap-[2.500px] mt-[3px]">
              {leftTools.map((k) => <Ico key={k} k={k} />)}
            </div>
          </div>
        </div>
        <div className="relative flex-1 bg-black overflow-hidden">
          <Drawing />
          <CommandLine />
        </div>
        <div className="w-[33px] shrink-0 pl-[4px]">
          <div className="w-[23px] h-[378px] bg-[#2f3744] border border-[#262d38] flex flex-col items-center">
            <span className="h-[8px] w-[14px] mt-[1px] bg-[radial-gradient(#7d8795_1px,transparent_1px)] bg-[length:3px_3px]" />
            <div className="flex flex-col items-center gap-[2.500px] mt-[3px]">
              {rightTools.map((k) => <Ico key={k} k={k} />)}
            </div>
          </div>
        </div>
      </div>

      {/* layout tabs */}
      <div className="h-[29px] shrink-0 mt-[3px] bg-[#232a35] flex items-start pt-[1px]">
        <span className="ml-[16px] mt-[2px]"><Ico k="menu" /></span>
        <div className="ml-[8px] w-[47px] h-[23px] -skew-x-[14deg] bg-[#3a4352] flex items-center justify-center">
          <span className="skew-x-[14deg] text-white font-semibold text-[11.500px]">模型</span>
        </div>
        <span className="ml-[10px] mt-[3px] text-[11.500px]">布局1</span>
        <span className="ml-[8px] mt-[1px] text-[#5b6472] text-[18px] font-light leading-none">/</span>
        <span className="ml-[13px] mt-[4px]"><Ico k="plus" size={14} /></span>
        <span className="ml-[11px] mt-[1px] text-[#5b6472] text-[18px] font-light leading-none">/</span>
      </div>

      {/* status bar */}
      <div className="h-[22px] shrink-0 bg-[#232a35] flex items-center pl-[4px] gap-[2px]">
        <div className="w-[362px] h-full bg-[#3a4352]" />
        <div className="w-[198px] h-full bg-[#3a4352] ml-[1px] flex items-center justify-end pr-[4px] whitespace-nowrap text-[11px] tracking-[-0.1px]">609941.4166, -52291.7139, 0.0000</div>
        <div className="w-[27px] h-full bg-[#3a4352] flex items-center justify-center text-[11.500px]">模型</div>
        <Cells cells={[{ k: "grid" }, { k: "dots" }, T]} className="w-[60px]" />
        <Cells cells={[{ k: "snapmode" }, { k: "snapact", on: true }, { k: "ortho", on: true }, { k: "polar" }, T, { k: "iso" }, T, { k: "ang" }, { k: "dynin", on: true }, T]} />
        <Cells cells={[{ k: "lw" }, { k: "transp", on: true }, { k: "sel" }, { k: "cube3" }, T]} />
        <Cells cells={[{ k: "ucsd", on: true }, { k: "gizmo" }, T, { k: "ucscube", on: true }, T]} />
        <Cells cells={[{ k: "anno", on: true }, { k: "anno2" }, { k: "anno3" }]} />
        <div className="h-full bg-[#3a4352] flex items-center pr-[1px] -ml-[2px] whitespace-nowrap">
          <span className="w-[50px] text-center text-[11px] tracking-[-0.2px]">1:1 / 100%</span>
          <span className="w-[14px] flex justify-center"><Tri /></span>
        </div>
        <Cells cells={[{ k: "gear" }, T]} />
        <Cells cells={[{ k: "plus" }]} className="-ml-[2px]" />
        <div className="h-full w-[86px] ml-[3px] bg-[#3a4352] flex items-center pl-[3px]">
          <Ico k="units" size={17} />
          <span className="ml-[6px] text-[12px] whitespace-nowrap">小数</span>
          <span className="ml-[24px]"><Tri /></span>
        </div>
        <Cells cells={[{ k: "qprops" }]} />
        <Cells cells={[{ k: "lockui" }, T, { k: "iso2" }]} />
        <Cells cells={[{ k: "hw", on: true }, { k: "clean" }]} className="ml-[2px]" />
        <Cells cells={[{ k: "stat" }]} className="ml-[2px]" />
        <Cells cells={[{ k: "full" }, { k: "menu" }]} className="ml-[3px]" />
      </div>
      <div className="h-[5px] shrink-0 bg-[#232a35]" />

      {/* watermarks laid over the whole screenshot */}
      <svg viewBox="0 0 1600 1268" className="absolute inset-0 w-[1600px] h-[1268px] pointer-events-none">
        {marks.map(([x, y]) => (
          <text key={`${x}-${y}`} x={x} y={y} transform={`rotate(-44 ${x} ${y})`} fontSize="35" fontWeight={700} fill="#fff" fillOpacity="0.11" className="font-['Noto_Sans','Noto_Sans_CJK_SC',sans-serif]">
            知末网www.znzmo.com
          </text>
        ))}
      </svg>
      <div className="absolute left-[1405px] top-[1127px] text-[60px] leading-[80px] font-bold text-[#c9c9c9] tracking-[2px] font-['Noto_Sans_CJK_SC',sans-serif] pointer-events-none">知末</div>
      <div className="absolute left-[1360px] top-[1211px] text-[31px] leading-[36px] font-medium tracking-[0.5px] text-white font-['Roboto',sans-serif] pointer-events-none">ID: 1180248239</div>
    </div>
  );
}
